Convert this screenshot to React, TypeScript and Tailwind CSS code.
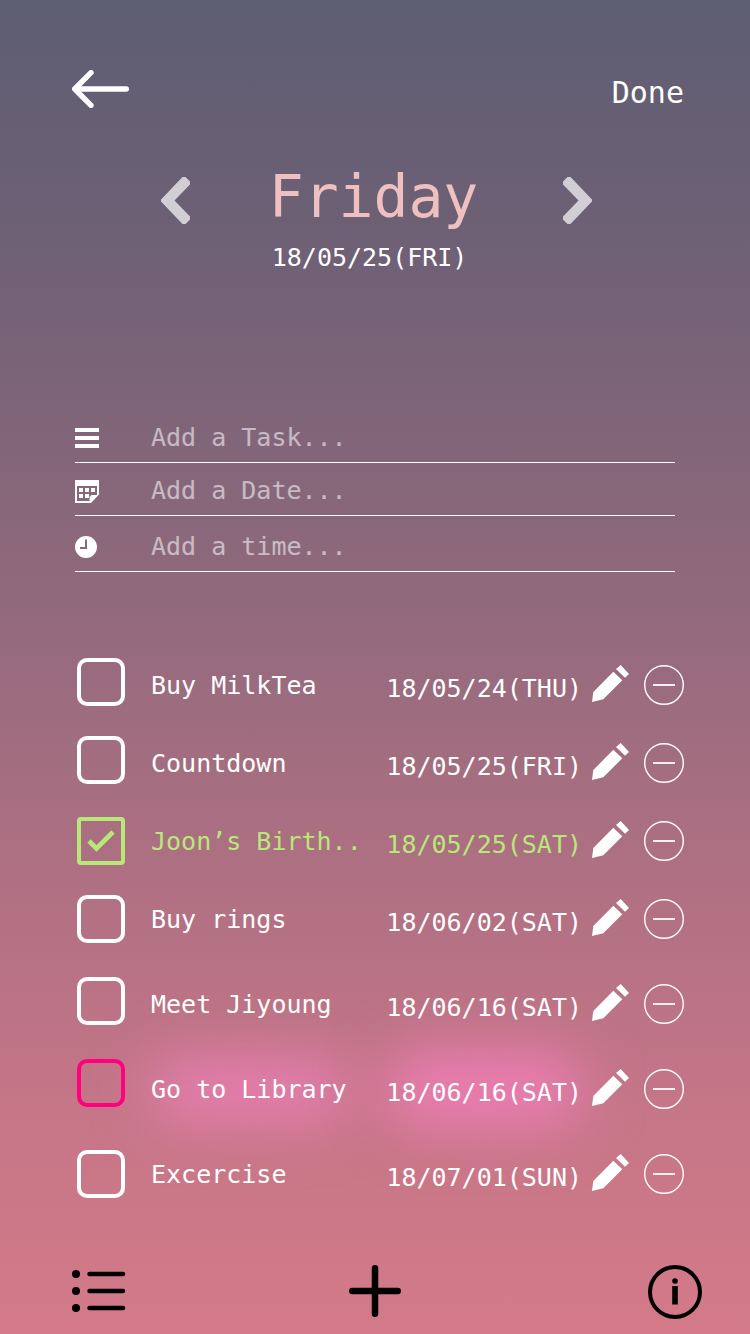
import { useState } from "react";
import type { ReactNode } from "react";

type Task = {
  id: number;
  name: string;
  date: string;
  done?: boolean;
  urgent?: boolean;
  raised?: boolean;
  spacing: string;
};

const initialTasks: Task[] = [
  { id: 1, name: "Buy MilkTea", date: "18/05/24(THU)", raised: true, spacing: "pb-[30px]" },
  { id: 2, name: "Countdown", date: "18/05/25(FRI)", raised: true, spacing: "pb-[30px]" },
  { id: 3, name: "Joon’s Birth..", date: "18/05/25(SAT)", done: true, spacing: "pb-[30px]" },
  { id: 4, name: "Buy rings", date: "18/06/02(SAT)", spacing: "pb-[37px]" },
  { id: 5, name: "Meet Jiyoung", date: "18/06/16(SAT)", raised: true, spacing: "pb-[37px]" },
  { id: 6, name: "Go to Library", date: "18/06/16(SAT)", urgent: true, spacing: "pb-[37px]" },
  { id: 7, name: "Excercise", date: "18/07/01(SUN)", spacing: "" },
];

function BackArrow() {
  return (
    <svg width="57" height="38" viewBox="0 0 57 38" fill="none" stroke="currentColor" strokeWidth="5.400" strokeLinecap="round" strokeLinejoin="round" aria-hidden="true">
      <path d="M19 2.7 2.7 19 19 35.3M4 19h50.300" />
    </svg>
  );
}

function Chevron({ next }: { next?: boolean }) {
  return (
    <svg width="29" height="47" viewBox="0 0 29 47" fill="currentColor" aria-hidden="true">
      {next ? (
        <path d="M0 4.500 4.500 0H7.500L29 22.500v2L7.500 47H4.500L0 42.500v-3L15.500 23.500 0 7.500Z" />
      ) : (
        <path d="M29 4.500 24.500 0H21.500L0 22.500v2L21.500 47h3L29 42.500v-3L13.500 23.500 29 7.500Z" />
      )}
    </svg>
  );
}

function MenuIcon() {
  return (
    <svg width="24" height="24" viewBox="0 0 24 24" fill="currentColor" aria-hidden="true">
      <path d="M0 2h24v4H0zM0 10h24v4H0zM0 18h24v4H0z" />
    </svg>
  );
}

function CalendarIcon() {
  return (
    <svg width="24" height="24" viewBox="0 -1 24 24" aria-hidden="true">
      <path
        fill="currentColor"
        fillRule="evenodd"
        d="M0 0h24v14.500L16 23H0ZM2 6v15h12.500V17l2-2H22V6Z"
      />
      <path fill="currentColor" d="M4 8h4v4H4zM10 8h4v4h-4zM16 8h4v4h-4zM4 14h4v4H4zM10 14h4v4h-4z" />
    </svg>
  );
}

function ClockIcon() {
  return (
    <svg width="24" height="24" viewBox="0 0 24 24" fill="none" aria-hidden="true">
      <circle cx="11" cy="12" r="11" fill="currentColor" />
      <path d="M11 4.500V13H5" stroke="#8b677b" strokeWidth="2" />
    </svg>
  );
}

function Pencil() {
  return (
    <svg width="37" height="37" viewBox="0 0 37 37" fill="currentColor" aria-hidden="true">
      <path d="M28.700 0 37 9 33 12.700 24 4ZM21.300 6.800 30.300 15.300 11.300 34.300 0 37 1.300 27Z" />
    </svg>
  );
}

function RemoveIcon() {
  return (
    <svg width="40" height="40" viewBox="0 0 40 40" fill="none" stroke="currentColor" aria-hidden="true">
      <circle cx="20" cy="20" r="19.300" strokeWidth="1.400" />
      <path d="M9 20h22" strokeWidth="1.800" />
    </svg>
  );
}

function ListIcon() {
  return (
    <svg width="54" height="42" viewBox="0 0 54 42" fill="currentColor" aria-hidden="true">
      <circle cx="4" cy="4" r="4" />
      <circle cx="4" cy="21" r="4" />
      <circle cx="4" cy="38" r="4" />
      <path d="M17.500 4h33.500M17.500 21h33.500M17.500 38h33.500" stroke="currentColor" strokeWidth="4.500" strokeLinecap="round" />
    </svg>
  );
}

function PlusIcon() {
  return (
    <svg width="52" height="52" viewBox="0 0 52 52" stroke="currentColor" strokeWidth="6.500" strokeLinecap="round" aria-hidden="true">
      <path d="M26 3.300v45.400M3.300 26h45.400" />
    </svg>
  );
}

function InfoIcon() {
  return (
    <svg width="54" height="54" viewBox="0 0 54 54" fill="none" aria-hidden="true">
      <circle cx="27" cy="27" r="25" stroke="currentColor" strokeWidth="4" />
      <circle cx="27" cy="16" r="2.800" fill="currentColor" />
      <path d="M27 21v18.500" stroke="currentColor" strokeWidth="5.600" />
    </svg>
  );
}

function Field({ id, label, icon, height }: { id: string; label: string; icon: ReactNode; height: string }) {
  return (
    <div className={`flex items-end border-b border-white ${height}`}>
      <label htmlFor={id} className="w-[70px] shrink-0 pb-3">
        {icon}
      </label>
      <input
        id={id}
        type="text"
        aria-label={label}
        placeholder={`${label}...`}
        className="mb-1 h-10 min-w-0 flex-1 bg-transparent px-1.5 text-[25px] leading-10 text-white outline-none placeholder:text-white/55"
      />
    </div>
  );
}

function Glow({ strength }: { strength: string }) {
  return <span aria-hidden="true" className={`absolute -inset-x-1 -inset-y-5 -z-10 rounded-full blur-[28px] ${strength}`} />;
}

function TaskRow({ task, onToggle, onRemove }: { task: Task; onToggle: () => void; onRemove: () => void }) {
  const id = `task-${task.id}`;
  const shift = task.urgent ? "-mt-3" : task.raised ? "-mt-1.5" : "";
  const box = task.done
    ? "rounded-[4px] border-[#b8e878]"
    : task.urgent
      ? "rounded-[10px] border-[#ff007e]"
      : "rounded-[10px] border-white";
  return (
    <li className={task.spacing}>
      <div className={`flex h-12 items-center ${task.done ? "text-[#b8e878]" : "text-white"}`}>
        <div className={`grid size-12 shrink-0 place-items-center ${shift}`}>
          <input
            id={id}
            type="checkbox"
            checked={!!task.done}
            onChange={onToggle}
            className={`col-start-1 row-start-1 size-12 appearance-none border-4 ${box}`}
          />
          {task.done && (
            <svg className="pointer-events-none col-start-1 row-start-1" width="28" height="22" viewBox="0 0 28 22" fill="none" stroke="currentColor" strokeWidth="4.600" aria-hidden="true">
              <path d="M2 11 9.500 18.500 26 2" />
            </svg>
          )}
        </div>
        <label htmlFor={id} className="ml-[26px] flex-1 pt-0.5 whitespace-nowrap">
          <span className="relative">
            {task.urgent && <Glow strength="bg-[#ee7fb8]/80" />}
            {task.name}
          </span>
        </label>
        <span className="relative pt-2 whitespace-nowrap">
          {task.urgent && <Glow strength="bg-[#f07db6]/90" />}
          {task.date}
        </span>
        <button type="button" aria-label={`Edit ${task.name}`} className="mb-1 ml-2.5 shrink-0 text-white">
          <Pencil />
        </button>
        <button type="button" aria-label={`Remove ${task.name}`} onClick={onRemove} className="ml-[15px] shrink-0 text-white">
          <RemoveIcon />
        </button>
      </div>
    </li>
  );
}

export default function App() {
  const [tasks, setTasks] = useState(initialTasks);

  return (
    <div className="isolate flex min-h-screen flex-col bg-[linear-gradient(to_bottom,#5e5e73_0%,#6e6075_18%,#90697c_44%,#b07083_66%,#c57687_83%,#d47a89_100%)] font-['DejaVu_Sans_Mono','Noto_Sans_CJK_KR',monospace] text-[25px] leading-8 text-white">
      <header className="flex items-center justify-between pt-[70px] pr-[66px] pl-[72px]">
        <a href="#back" aria-label="Back">
          <BackArrow />
        </a>
        <button type="button" className="pt-2 text-[30px] leading-[30px]">
          Done
        </button>
      </header>

      <main className="flex flex-1 flex-col">
        <section className="mx-auto mt-14 flex w-[434px] justify-between pl-[3px]">
          <button type="button" aria-label="Previous day" className="mt-[13px] h-[47px] text-[#d2ced6]">
            <Chevron />
          </button>
          <div className="flex flex-col items-start pr-1.5">
            <h1 className="text-[58px] leading-[66px] text-[#f0c0c0]">Friday</h1>
            <time dateTime="2018-05-25" className="mt-3 pl-[3px] leading-8">
              18/05/25(FRI)
            </time>
          </div>
          <button type="button" aria-label="Next day" className="mt-[13px] h-[47px] text-[#d2ced6]">
            <Chevron next />
          </button>
        </section>

        <form className="mt-[136px] mr-[75px] ml-[75px]" onSubmit={(e) => e.preventDefault()}>
          <Field id="new-task" label="Add a Task" icon={<MenuIcon />} height="h-[53px]" />
          <Field id="new-date" label="Add a Date" icon={<CalendarIcon />} height="h-[53px]" />
          <Field id="new-time" label="Add a time" icon={<ClockIcon />} height="h-14" />
        </form>

        <ul className="mt-[89px] pr-[66px] pl-[77px]">
          {tasks.map((task) => (
            <TaskRow
              key={task.id}
              task={task}
              onToggle={() => setTasks(tasks.map((t) => (t.id === task.id ? { ...t, done: !t.done } : t)))}
              onRemove={() => setTasks(tasks.filter((t) => t.id !== task.id))}
            />
          ))}
        </ul>
      </main>

      <nav className="grid grid-cols-3 items-start pt-6 pb-[15px] text-black">
        <a href="#list" aria-label="All tasks" className="mt-[5px] ml-[72px] justify-self-start">
          <ListIcon />
        </a>
        <button type="button" aria-label="Add task" className="justify-self-center">
          <PlusIcon />
        </button>
        <a href="#info" aria-label="Information" className="mr-12 justify-self-end">
          <InfoIcon />
        </a>
      </nav>
    </div>
  );
}
